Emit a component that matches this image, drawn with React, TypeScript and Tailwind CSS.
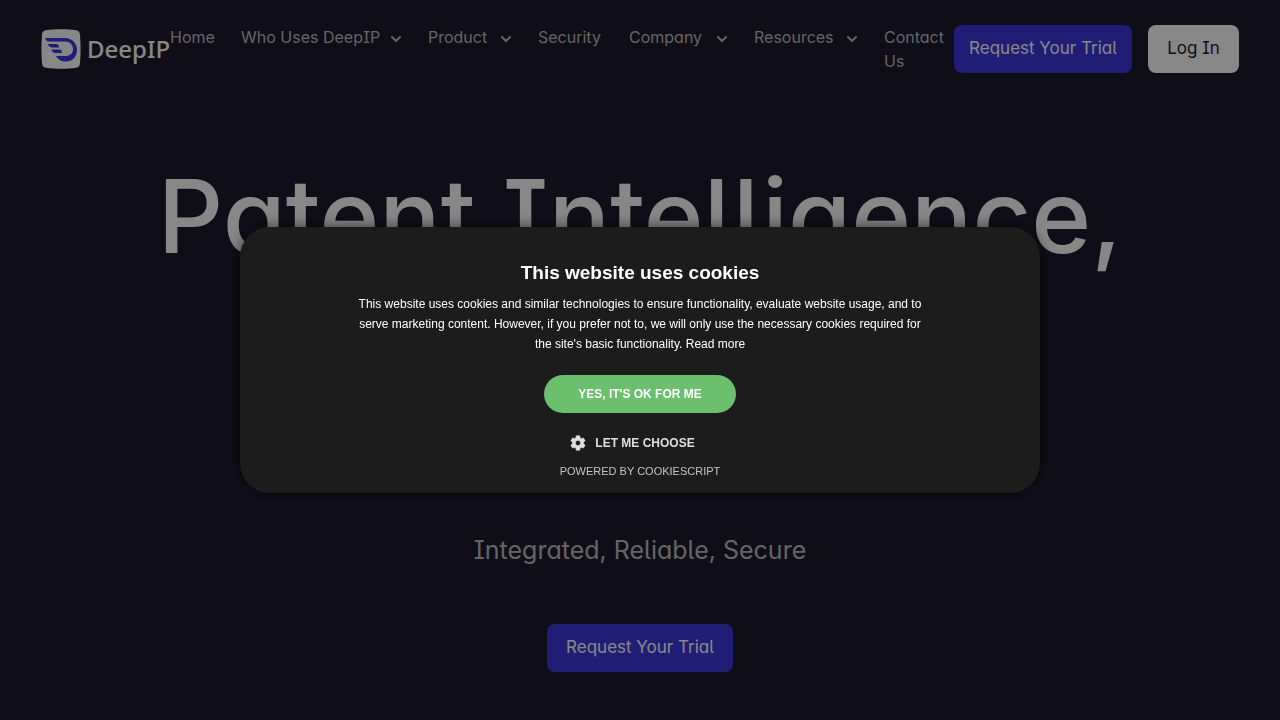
import React from 'react';
import { ChevronDown } from 'lucide-react';

const navItems = [
  { label: 'Home', menu: false, width: 'w-[47px]' },
  { label: 'Who Uses DeepIP', menu: true, width: 'w-[163px]' },
  { label: 'Product', menu: true, width: 'w-[86px]' },
  { label: 'Security', menu: false, width: 'w-[67px]' },
  { label: 'Company', menu: true, width: 'w-[101px]' },
  { label: 'Resources', menu: true, width: 'w-[106px]' },
  { label: 'Contact Us', menu: false, width: 'w-[70px]' },
];

const Logo: React.FC = () => (
  <a href="#" aria-label="DeepIP" className="flex items-center gap-1.5 shrink-0">
    <svg className="w-10 h-10" viewBox="0 0 40 40">
      <path d="M5 1.2C14-.2 26-.2 35 1.2 38 1.700 38.600 3 39 6c.8 9 .8 19 0 28-.4 3-1 4.300-4 4.800-9 1.400-21 1.400-30 0-3-.5-3.600-1.800-4-4.800C.2 25 .2 15 1 6c.4-3 1-4.300 4-4.800Z" fill="#fff" />
      <g fill="#3e38df">
        <path d="M4 9h20c7 0 12 5 12 12s-5 11.500-11 11.500c-5 0-8-2-10-5.500h9c5 0 8-2.500 8-7 0-4.600-3.500-7.600-8-7.600H8C6 12.400 4.500 11 4 9Z" />
        <path d="M7 15h8.500c1.500 0 2.500 1.500 2.500 3.500h-7C9 18.500 7.500 17 7 15Z" />
        <path d="M10.500 20.500h8c1.500 0 2.500 1.500 2.500 3.500h-6.500c-2 0-3.500-1.500-4-3.500Z" />
      </g>
    </svg>
    <span className="font-['Noto_Sans',sans-serif] font-medium text-2xl text-white">DeepIP</span>
  </a>
);

const GearIcon: React.FC = () => (
  <svg className="w-[18px] h-[18px]" viewBox="0 0 24 24" fill="currentColor" stroke="currentColor" strokeWidth={1}>
    <path d="M19.140 12.940c.04-.3.06-.61.06-.94 0-.32-.02-.64-.07-.94l2.030-1.580a.49.49 0 0 0 .12-.61l-1.920-3.320a.488.488 0 0 0-.59-.22l-2.390.96c-.5-.38-1.030-.7-1.620-.94l-.36-2.540a.484.484 0 0 0-.48-.41h-3.840c-.24 0-.43.17-.47.41l-.36 2.540c-.59.24-1.130.57-1.620.94l-2.390-.96c-.22-.08-.47 0-.59.22L2.740 8.870c-.12.21-.08.47.12.61l2.030 1.580c-.05.3-.09.63-.09.94s.02.64.07.94l-2.030 1.580a.49.49 0 0 0-.12.61l1.920 3.320c.12.22.37.29.59.22l2.390-.96c.5.38 1.030.7 1.620.94l.36 2.540c.05.24.24.41.48.41h3.840c.24 0 .44-.17.47-.41l.36-2.540c.59-.24 1.130-.56 1.620-.94l2.390.96c.22.08.47 0 .59-.22l1.920-3.320c.12-.22.07-.47-.12-.61l-2.010-1.580zM12 15.600c-1.980 0-3.600-1.620-3.600-3.600s1.620-3.600 3.600-3.600 3.600 1.620 3.600 3.600-1.620 3.600-3.600 3.600z" />
  </svg>
);

const Header: React.FC = () => (
  <header className="flex items-start justify-between px-[41px] pt-[25px]">
    <div className="flex pt-1 w-[129px]">
      <Logo />
    </div>
    <nav className="flex gap-6 text-[#bfbfbf]">
      {navItems.map((item) => (
        <a key={item.label} href="#" className={`flex items-start justify-between ${item.width}`}>
          <span>{item.label}</span>
          {item.menu && <ChevronDown className="w-4 h-4 mt-1.5" strokeWidth={3} />}
        </a>
      ))}
    </nav>
    <div className="flex gap-4 shrink-0 text-[17px]">
      <button className="bg-[#3e38df] text-white rounded-lg w-[178px] h-12">Request Your Trial</button>
      <button className="bg-white text-[#1e1a2d] rounded-lg w-[91px] h-12">Log In</button>
    </div>
  </header>
);

const CookieDialog: React.FC = () => (
  <div className="fixed inset-0 flex items-center justify-center bg-black/47">
    <div
      role="dialog"
      aria-labelledby="cookie-title"
      className="w-[800px] max-w-full bg-[#1c1c1c] rounded-[30px] shadow-[0_0_15px_rgba(0,0,0,0.6)] pt-8 pb-3 flex flex-col items-center text-center text-white font-['Liberation_Sans',Arial,sans-serif]"
    >
      <h2 id="cookie-title" className="text-[19px] leading-7 font-bold">This website uses cookies</h2>
      <p className="mt-[7px] w-[580px] max-w-full text-xs leading-5">
        This website uses cookies and similar technologies to ensure functionality, evaluate website usage, and to
        serve marketing content. However, if you prefer not to, we will only use the necessary cookies required for
        the site's basic functionality. <a href="#">Read more</a>
      </p>
      <button className="mt-[21px] h-[38px] w-48 rounded-full bg-[#6bbf6d] text-xs font-bold">YES, IT'S OK FOR ME</button>
      <button className="mt-5 h-5 flex items-center gap-2 pr-4 text-xs font-bold text-[#dfdfdf]">
        <GearIcon />
        LET ME CHOOSE
      </button>
      <a href="#" className="mt-2 text-[11px] leading-5 text-[#c4c4c4]">POWERED BY COOKIESCRIPT</a>
    </div>
  </div>
);

const App: React.FC = () => (
  <div className="min-h-screen bg-[#1e1a2d] font-['Inter',sans-serif] [font-feature-settings:'cv05','cv08','cv11'] text-base">
    <Header />
    <main className="flex flex-col items-center pt-21 pb-12 text-center">
      <h1 className="text-[102px] leading-[119px] font-medium text-white">Patent Intelligence,</h1>
      <p className="mt-60 pt-4 text-[25px] leading-9 text-[#bfbfbf]">Integrated, Reliable, Secure</p>
      <button className="mt-14 bg-[#3e38df] text-white text-[17px] rounded-lg w-[186px] h-12">Request Your Trial</button>
    </main>
    <CookieDialog />
  </div>
);

export default App;
